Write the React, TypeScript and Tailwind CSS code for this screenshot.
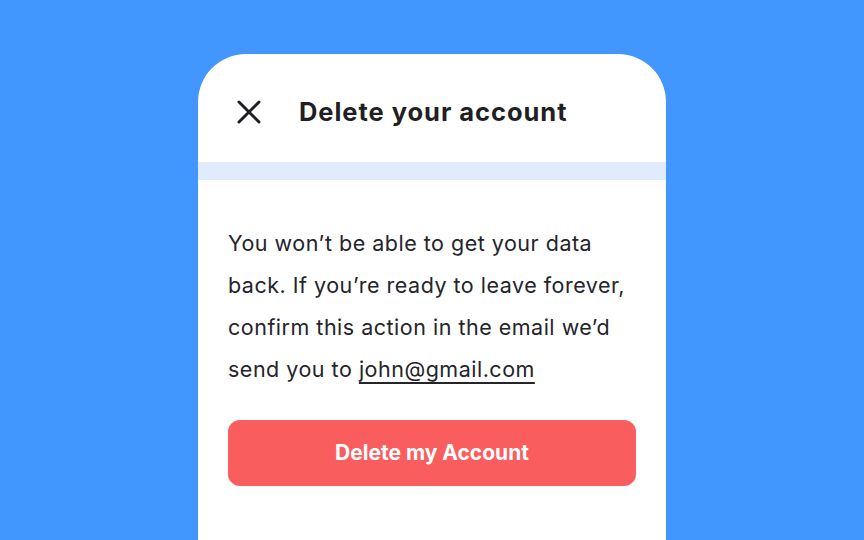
export default function App() {
  return (
    <div className="flex h-[540px] w-[864px] justify-center overflow-hidden bg-[#4197fe] pt-[54px] font-['Inter',sans-serif]">
      <div className="flex h-[560px] w-[468px] flex-col rounded-t-[48px] bg-white">
        {/* Header */}
        <div className="flex h-[108px] items-center pl-[36px] pt-[8px]">
          <svg viewBox="0 0 24 24" className="size-[30px] text-[#1f1f24]" fill="none" stroke="currentColor" strokeWidth="2.4" strokeLinecap="round" aria-hidden>
            <path d="M4 4 L20 20 M20 4 L4 20" />
          </svg>
          <h1 className="ml-[35px] text-[25.5px] font-bold tracking-[0.95px] text-[#1f1f24]">
            Delete your account
          </h1>
        </div>
        <div className="h-[18px] bg-[#e0ecfd]" />

        {/* Body */}
        <div className="px-[30px] pt-[42px]">
          <p className="text-[21.5px] leading-[42px] tracking-[0.5px] text-[#24242a]">
            You won’t be able to get your data back. If you’re ready to leave forever, confirm this action in the email we’d send you to{" "}
            <a href="#" className="underline decoration-[1.5px] underline-offset-[5px]">
              john@gmail.com
            </a>
          </p>
          <button
            type="button"
            className="mt-[30px] flex h-[66px] w-[408px] items-center justify-center rounded-[12px] bg-[#f95d5d] text-[21px] font-bold text-white"
          >
            Delete my Account
          </button>
        </div>
      </div>
    </div>
  );
}
